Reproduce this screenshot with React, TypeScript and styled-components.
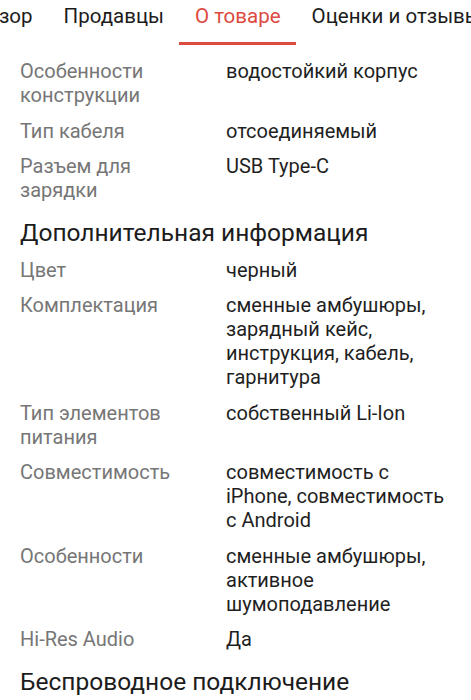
import React from 'react';
import styled, { createGlobalStyle } from 'styled-components';

const GlobalStyle = createGlobalStyle`
  html, body {
    margin: 0;
    padding: 0;
    background: #ffffff;
  }
  body {
    font-family: Roboto, "Noto Sans", Arial, sans-serif;
    -webkit-font-smoothing: antialiased;
  }
`

const Page = styled.div`
  width: 471px;
  height: 700px;
  overflow: hidden;
  background: #fff;
`

const TabBar = styled.nav`
  display: flex;
  height: 46px;
  overflow: hidden;
  white-space: nowrap;
`

const TabStrip = styled.div`
  display: flex;
  margin-left: -42px;
`

const Tab = styled.div<{ $active?: boolean }>`
  display: flex;
  align-items: flex-start;
  padding: 3px 15.5px 0;
  height: 39px;
  font-size: 20.5px;
  line-height: 26px;
  color: ${p => (p.$active ? '#dc4a40' : '#1c1c1c')};
  border-bottom: 3px solid ${p => (p.$active ? '#dc4a40' : 'transparent')};
  box-sizing: content-box;
  flex-shrink: 0;
`

const Content = styled.div`
  padding: 13px 22px 0 20px;
  display: flex;
  flex-direction: column;
`

const Row = styled.div`
  display: grid;
  grid-template-columns: 206px 1fr;
  font-size: 20px;
  line-height: 24px;
  margin-bottom: 11.5px;
`

const Label = styled.div`
  color: #767676;
  padding-right: 24px;
`

const Value = styled.div`
  color: #1f1f1f;
`

const Heading = styled.h2`
  margin: 4px 0 10px;
  font-size: 24.5px;
  line-height: 30px;
  font-weight: 400;
  color: #1c1c1c;
`

type Spec = { label: string; value: string }

const main: Spec[] = [
  { label: 'Особенности конструкции', value: 'водостойкий корпус' },
  { label: 'Тип кабеля', value: 'отсоединяемый' },
  { label: 'Разъем для зарядки', value: 'USB Type-C' },
]

const extra: Spec[] = [
  { label: 'Цвет', value: 'черный' },
  { label: 'Комплектация', value: 'сменные амбушюры, зарядный кейс, инструкция, кабель, гарнитура' },
  { label: 'Тип элементов питания', value: 'собственный Li-Ion' },
  { label: 'Совместимость', value: 'совместимость с iPhone, совместимость с Android' },
  { label: 'Особенности', value: 'сменные амбушюры, активное шумоподавление' },
  { label: 'Hi-Res Audio', value: 'Да' },
]

const tabs = ['Обзор', 'Продавцы', 'О товаре', 'Оценки и отзывы']

const SpecRow = ({ label, value }: Spec) => (
  <Row>
    <Label>{label}</Label>
    <Value>{value}</Value>
  </Row>
)

const App = () => {
  return (
    <Page>
      <GlobalStyle />
      <TabBar>
        <TabStrip>
          {tabs.map(t => (
            <Tab key={t} $active={t === 'О товаре'}>{t}</Tab>
          ))}
        </TabStrip>
      </TabBar>

      <Content>
        {main.map(s => <SpecRow key={s.label} {...s} />)}
        <Heading>Дополнительная информация</Heading>
        {extra.map(s => <SpecRow key={s.label + s.value} {...s} />)}
        <Heading>Беспроводное подключение</Heading>
      </Content>
    </Page>
  );
};

export default App;
